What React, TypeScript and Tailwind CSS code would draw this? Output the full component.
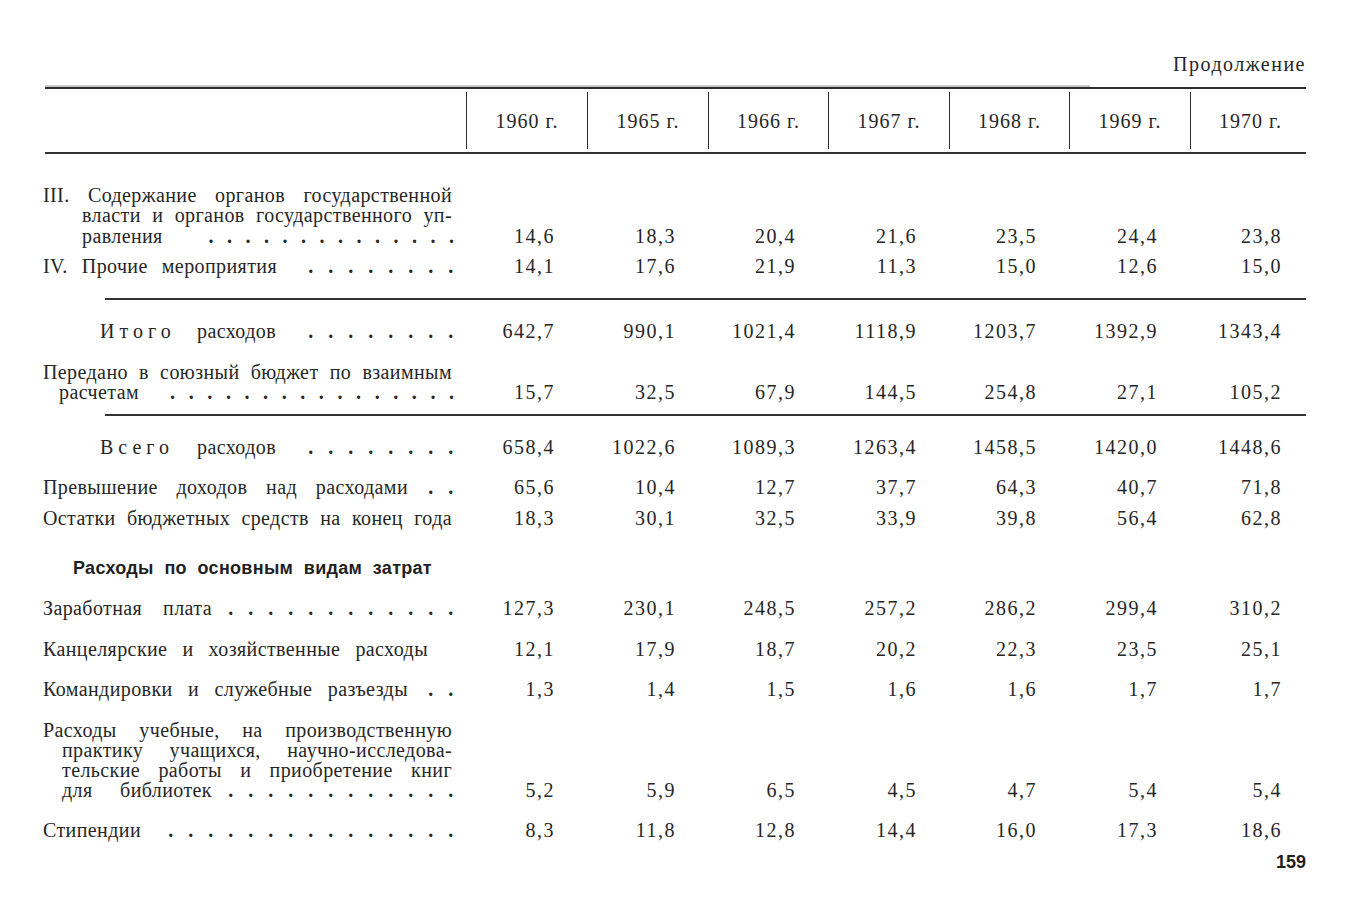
import type { ReactNode } from "react";

const years = ["1960 г.", "1965 г.", "1966 г.", "1967 г.", "1968 г.", "1969 г.", "1970 г."];

const gridCols = "grid grid-cols-[423px_121px_121px_120px_121px_120px_121px_116px]";

// dot leader, right-aligned to the end of the label column
function Leader({ count, step = "w-[20px]" }: { count: number; step?: string }) {
  return (
    <span className="flex flex-1 justify-end">
      {Array.from({ length: count }).map((_, i) => (
        <span key={i} className={`shrink-0 text-center font-bold ${step}`}>
          .
        </span>
      ))}
    </span>
  );
}

// justified line that ends where the printed column of text ends
function Just({ children, className = "" }: { children: ReactNode; className?: string }) {
  return (
    <div className={`mr-[9px] whitespace-nowrap text-justify [text-align-last:justify] ${className}`}>
      {children}
    </div>
  );
}

function Fit({ w, children }: { w: string; children: ReactNode }) {
  return (
    <span className={`inline-block shrink-0 whitespace-nowrap text-justify [text-align-last:justify] ${w}`}>
      {children}
    </span>
  );
}

function Row({
  label,
  values,
  className = ""
}: {
  label: ReactNode;
  values?: string[];
  className?: string;
}) {
  return (
    <div className={`${gridCols} items-end ${className}`}>
      <div className="pr-[5px]">{label}</div>
      {values?.map((value, i) => (
        <div
          key={i}
          className={`text-right tracking-[1.5px] ${i === 6 ? "pr-[24px]" : "pr-[32px]"}`}
        >
          {value}
        </div>
      ))}
    </div>
  );
}

function Rule({ className = "" }: { className?: string }) {
  return <div className={`ml-[62px] h-[2px] bg-[#333] ${className}`} />;
}

export default function App() {
  return (
    <div
      className="h-[916px] w-[1349px] overflow-hidden bg-white px-[43px] pt-[54px] text-[20px] leading-5 tracking-[0.4px] text-[#262626]"
      style={{ fontFamily: '"Liberation Serif", "DejaVu Serif", serif' }}
    >
      <div className="text-right tracking-[1.5px]">Продолжение</div>

      <div className="ml-[2px] mt-[11px] h-[2px] w-[1045px] bg-[#c8c8c8]" />
      <div className="ml-[2px] h-[2px] bg-[#2e2e2e]" />

      <div className={`${gridCols} h-[63px]`}>
        <div />
        {years.map((year, i) => (
          <div
            key={year}
            className={`my-[3px] flex items-center justify-center border-l-[1.5px] border-[#2e2e2e] tracking-[1px] ${
              i === 6 ? "pl-[4px]" : ""
            }`}
          >
            {year}
          </div>
        ))}
      </div>
      <div className="ml-[2px] h-[1.5px] bg-[#333]" />

      <Row
        className="mt-[31px] leading-[20.5px]"
        label={
          <>
            <Just>III. Содержание органов государственной</Just>
            <Just className="ml-[39px]">власти и органов государственного уп-</Just>
            <div className="ml-[39px] flex">
              <span>равления</span>
              <Leader count={14} step="w-[18.5px]" />
            </div>
          </>
        }
        values={["14,6", "18,3", "20,4", "21,6", "23,5", "24,4", "23,8"]}
      />

      <Row
        className="mt-[10px]"
        label={
          <div className="flex">
            <Fit w="w-[234px]">IV. Прочие мероприятия</Fit>
            <Leader count={8} />
          </div>
        }
        values={["14,1", "17,6", "21,9", "11,3", "15,0", "12,6", "15,0"]}
      />

      <Rule className="mt-[22px]" />

      <Row
        className="mt-[21px]"
        label={
          <div className="ml-[57px] flex">
            <Fit w="w-[176px]">
              <span className="tracking-[5px]">Итого</span> расходов
            </Fit>
            <Leader count={8} />
          </div>
        }
        values={["642,7", "990,1", "1021,4", "1118,9", "1203,7", "1392,9", "1343,4"]}
      />

      <Row
        className="mt-[21px]"
        label={
          <>
            <Just>Передано в союзный бюджет по взаимным</Just>
            <div className="ml-[16px] flex">
              <span>расчетам</span>
              <Leader count={16} step="w-[18.6px]" />
            </div>
          </>
        }
        values={["15,7", "32,5", "67,9", "144,5", "254,8", "27,1", "105,2"]}
      />

      <Rule className="mt-[12px]" />

      <Row
        className="mt-[21px]"
        label={
          <div className="ml-[57px] flex">
            <Fit w="w-[176px]">
              <span className="tracking-[5px]">Всего</span> расходов
            </Fit>
            <Leader count={8} />
          </div>
        }
        values={["658,4", "1022,6", "1089,3", "1263,4", "1458,5", "1420,0", "1448,6"]}
      />

      <Row
        className="mt-[20px]"
        label={
          <div className="flex">
            <Fit w="w-[365px]">Превышение доходов над расходами</Fit>
            <Leader count={2} />
          </div>
        }
        values={["65,6", "10,4", "12,7", "37,7", "64,3", "40,7", "71,8"]}
      />

      <Row
        className="mt-[11px]"
        label={<Just>Остатки бюджетных средств на конец года</Just>}
        values={["18,3", "30,1", "32,5", "33,9", "39,8", "56,4", "62,8"]}
      />

      <div className="mt-[30px]">
        <div
          className="ml-[30px] w-[359px] whitespace-nowrap text-justify text-[18px] font-bold tracking-[0.3px] text-[#1f1f1f] [text-align-last:justify]"
          style={{ fontFamily: '"Liberation Sans Narrow", "Liberation Sans", Arial, sans-serif' }}
        >
          Расходы по основным видам затрат
        </div>
      </div>

      <Row
        className="mt-[20px]"
        label={
          <div className="flex">
            <Fit w="w-[169px]">Заработная плата</Fit>
            <Leader count={12} />
          </div>
        }
        values={["127,3", "230,1", "248,5", "257,2", "286,2", "299,4", "310,2"]}
      />

      <Row
        className="mt-[21px]"
        label={
          <div className="flex">
            <Fit w="w-[385px]">Канцелярские и хозяйственные расходы</Fit>
          </div>
        }
        values={["12,1", "17,9", "18,7", "20,2", "22,3", "23,5", "25,1"]}
      />

      <Row
        className="mt-[20px]"
        label={
          <div className="flex">
            <Fit w="w-[365px]">Командировки и служебные разъезды</Fit>
            <Leader count={2} />
          </div>
        }
        values={["1,3", "1,4", "1,5", "1,6", "1,6", "1,7", "1,7"]}
      />

      <Row
        className="mt-[21px]"
        label={
          <>
            <Just>Расходы учебные, на производственную</Just>
            <Just className="ml-[19px]">практику учащихся, научно-исследова-</Just>
            <Just className="ml-[19px]">тельские работы и приобретение книг</Just>
            <div className="ml-[19px] flex">
              <Fit w="w-[150px]">для библиотек</Fit>
              <Leader count={12} />
            </div>
          </>
        }
        values={["5,2", "5,9", "6,5", "4,5", "4,7", "5,4", "5,4"]}
      />

      <Row
        className="mt-[20px]"
        label={
          <div className="flex">
            <span>Стипендии</span>
            <Leader count={15} />
          </div>
        }
        values={["8,3", "11,8", "12,8", "14,4", "16,0", "17,3", "18,6"]}
      />

      <div
        className="mt-[12px] text-right text-[18px] font-bold tracking-normal text-[#1f1f1f]"
        style={{ fontFamily: '"Liberation Sans Narrow", "Liberation Sans", Arial, sans-serif' }}
      >
        159
      </div>
    </div>
  );
}
